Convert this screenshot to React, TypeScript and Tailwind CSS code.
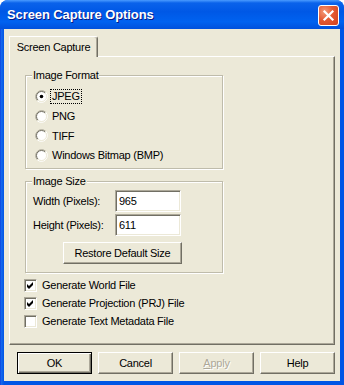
import React from "react";

function Radio({ checked }: { checked?: boolean }) {
  return (
    <svg width="13" height="13" viewBox="0 0 13 13" className="shrink-0">
      <circle cx="6.5" cy="6.5" r="5" fill="#fff" />
      <path d="M2.26 10.74 A6 6 0 0 1 10.74 2.26" stroke="#ACA899" fill="none" strokeWidth="1" />
      <path d="M10.74 2.26 A6 6 0 0 1 2.26 10.74" stroke="#FFFFFF" fill="none" strokeWidth="1" />
      <path d="M2.96 10.04 A5 5 0 0 1 10.04 2.96" stroke="#716F64" fill="none" strokeWidth="1" />
      <path d="M10.04 2.96 A5 5 0 0 1 2.96 10.04" stroke="#ECE9D8" fill="none" strokeWidth="1" />
      {checked && <circle cx="6.5" cy="6.5" r="1.8" fill="#000" />}
    </svg>
  );
}

function Check({ checked }: { checked?: boolean }) {
  return (
    <div className="w-[13px] h-[13px] shrink-0 bg-white border border-t-[#ACA899] border-l-[#ACA899] border-b-white border-r-white shadow-[inset_1px_1px_0_#716F64,inset_-1px_-1px_0_#ECE9D8] relative">
      {checked && (
        <svg width="11" height="11" viewBox="0 0 11 11" className="absolute left-0 top-0">
          <polygon points="2,4 4,6 8,2 8,5 4,9 2,7" fill="#000" />
        </svg>
      )}
    </div>
  );
}

function Btn({ children, def, className = "" }: { children: React.ReactNode; def?: boolean; className?: string }) {
  return (
    <div
      className={
        "w-[75px] h-[22px] flex items-center justify-center bg-[#ECE9D8] " +
        (def
          ? "border border-black shadow-[inset_1px_1px_0_#fff,inset_-1px_-1px_0_#716F64,inset_-2px_-2px_0_#ACA899] "
          : "border border-t-white border-l-white border-b-[#716F64] border-r-[#716F64] shadow-[inset_-1px_-1px_0_#ACA899] ") +
        className
      }
    >
      {children}
    </div>
  );
}

function Field({ value }: { value: string }) {
  return (
    <div className="w-[66px] h-[22px] bg-white border border-t-[#ACA899] border-l-[#ACA899] border-b-white border-r-white shadow-[inset_1px_1px_0_#716F64,inset_-1px_-1px_0_#ECE9D8] flex items-center pl-[3px]">
      {value}
    </div>
  );
}

export default function App() {
  return (
    <div className="w-[344px] h-[385px] flex flex-col rounded-t-[8px] overflow-hidden bg-[#0055E5] font-['Liberation_Sans',Arial,sans-serif] text-[11px] tracking-[-0.25px] text-black">
      {/* Title bar */}
      <div className="h-[29px] shrink-0 flex items-start justify-between bg-[linear-gradient(180deg,#4A9BFF_0px,#0A62EA_3px,#0058E6_40%,#0062F0_75%,#0050DC_100%)]">
        <div className="mt-[7px] pl-[7px] text-[13px] leading-[15px] font-bold text-white tracking-[-0.1px] [text-shadow:1px_1px_0_#0A1883]">
          Screen Capture Options
        </div>
        <div className="mt-[5px] mr-[5px] w-[21px] h-[21px] rounded-[3px] border border-white bg-[radial-gradient(circle_at_30%_30%,#F49A78_0%,#E45A33_45%,#D0411E_100%)] flex items-center justify-center">
          <svg width="13" height="13" viewBox="0 0 13 13">
            <path d="M2.5 2.5 L10.5 10.5 M10.5 2.5 L2.5 10.5" stroke="#fff" strokeWidth="2.2" strokeLinecap="square" />
          </svg>
        </div>
      </div>

      {/* Frame */}
      <div className="flex-1 flex flex-col pl-[4px] pr-[4px] pb-[4px] bg-[linear-gradient(90deg,#0831D9_0px,#166AEE_1px,#0055E5_4px)]">
        <div className="flex-1 bg-[#ECE9D8] flex flex-col pt-[7px] pl-[5px]">
          {/* Tab */}
          <div className="h-[20px] flex relative z-10">
            <div className="w-[89px] h-[21px] bg-[#ECE9D8] border-l border-t border-l-white border-t-white border-r border-r-[#716F64] shadow-[inset_-1px_0_0_#ACA899] rounded-tr-[3px] flex items-center justify-center">
              Screen Capture
            </div>
          </div>

          {/* Panel */}
          <div className="w-[326px] h-[289px] border border-t-white border-l-white border-b-[#716F64] border-r-[#716F64] shadow-[inset_-1px_-1px_0_#ACA899] pl-[15px] pt-[18px] flex flex-col">
            {/* Image Format */}
            <div className="relative w-[198px] h-[94px] border border-[#BFBCAB] shadow-[inset_1px_1px_0_#fff,1px_1px_0_#fff] pl-[9px] pt-[11px] flex flex-col">
              <span className="absolute left-[6px] top-[-7px] leading-[13px] px-[1px] bg-[#ECE9D8]">Image Format</span>
              <div className="h-[19.5px] flex items-center gap-[3px]">
                <Radio checked />
                <span className="outline outline-1 outline-dotted outline-black leading-[13px] px-[1px]">JPEG</span>
              </div>
              <div className="h-[19.5px] flex items-center gap-[4px]">
                <Radio />
                <span>PNG</span>
              </div>
              <div className="h-[19.5px] flex items-center gap-[4px]">
                <Radio />
                <span>TIFF</span>
              </div>
              <div className="h-[19.5px] flex items-center gap-[4px]">
                <Radio />
                <span>Windows Bitmap (BMP)</span>
              </div>
            </div>

            {/* Image Size */}
            <div className="relative mt-[12px] w-[198px] h-[92px] border border-[#BFBCAB] shadow-[inset_1px_1px_0_#fff,1px_1px_0_#fff] pl-[7px] pt-[8px] flex flex-col">
              <span className="absolute left-[6px] top-[-7px] leading-[13px] px-[1px] bg-[#ECE9D8]">Image Size</span>
              <div className="h-[22px] flex items-center">
                <span className="w-[82px]">Width (Pixels):</span>
                <Field value="965" />
              </div>
              <div className="mt-[2px] h-[22px] flex items-center">
                <span className="w-[82px]">Height (Pixels):</span>
                <Field value="611" />
              </div>
              <Btn className="mt-[6px] ml-[30px] !w-[119px]">Restore Default Size</Btn>
            </div>

            {/* Checkboxes */}
            <div className="mt-[3px] ml-[-1px] flex flex-col">
              <div className="h-[18px] flex items-center gap-[5px]">
                <Check checked />
                <span>Generate World File</span>
              </div>
              <div className="h-[18px] flex items-center gap-[5px]">
                <Check checked />
                <span>Generate Projection (PRJ) File</span>
              </div>
              <div className="h-[18px] flex items-center gap-[5px]">
                <Check />
                <span>Generate Text Metadata File</span>
              </div>
            </div>
          </div>

          {/* Buttons */}
          <div className="mt-[7px] pl-[8px] flex gap-[6px]">
            <Btn def>OK</Btn>
            <Btn>Cancel</Btn>
            <Btn>
              <span className="text-[#ACA899] [text-shadow:1px_1px_0_#fff]">
                <span className="underline">A</span>pply
              </span>
            </Btn>
            <Btn>Help</Btn>
          </div>
        </div>
      </div>
    </div>
  );
}
